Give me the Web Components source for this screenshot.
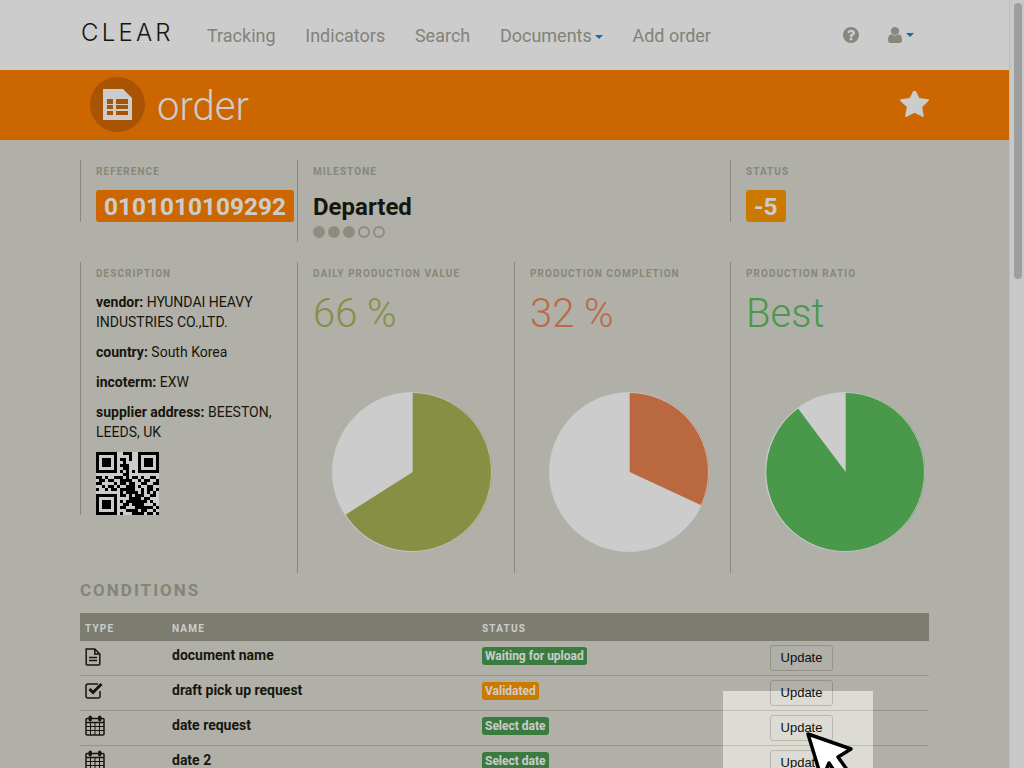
<!DOCTYPE html>
<html lang="en">
<head>
<meta charset="utf-8">
<title>CLEAR - order</title>
<style>
  html, body { margin: 0; height: 768px; overflow: hidden; }
  body { font-family: Roboto, "Liberation Sans", sans-serif; font-size: 14px; color: #1c1c10; background: #dcdcd4; }
  b { font-weight: 700; }
</style>
</head>
<body>
<clear-app>
  <clear-navbar></clear-navbar>
  <clear-banner title-text="order"></clear-banner>

  <clear-info-grid>
    <clear-field label="REFERENCE"><clear-tag size="big" color="#ff8000">0101010109292</clear-tag></clear-field>
    <clear-field label="MILESTONE" wide><clear-milestone text="Departed" done="3" total="5"></clear-milestone></clear-field>
    <clear-field label="STATUS"><clear-tag size="big" color="#ff9800">-5</clear-tag></clear-field>
  </clear-info-grid>

  <clear-info-grid>
    <clear-field label="DESCRIPTION">
      <clear-description>
        <p><b>vendor:</b> HYUNDAI HEAVY<br>INDUSTRIES CO.,LTD.</p>
        <p><b>country:</b> South Korea</p>
        <p><b>incoterm:</b> EXW</p>
        <p><b>supplier address:</b> BEESTON,<br>LEEDS, UK</p>
        <clear-qr></clear-qr>
      </clear-description>
    </clear-field>
    <clear-field label="DAILY PRODUCTION VALUE"><clear-chart value="66 %" color="#a9b356" end-x="-66" end-y="42"></clear-chart></clear-field>
    <clear-field label="PRODUCTION COMPLETION"><clear-chart value="32 %" text-color="#e9855a" color="#e98250" end-x="71" end-y="33" short-arc></clear-chart></clear-field>
    <clear-field label="PRODUCTION RATIO"><clear-chart value="Best" color="#5dbe5d" end-x="-48" end-y="-64"></clear-chart></clear-field>
  </clear-info-grid>

  <clear-conditions>
    <clear-condition icon="file" name="document name"><clear-tag color="#499a4f">Waiting for upload</clear-tag></clear-condition>
    <clear-condition icon="check" name="draft pick up request"><clear-tag color="#ff9800">Validated</clear-tag></clear-condition>
    <clear-condition icon="calendar" name="date request"><clear-tag color="#499a4f">Select date</clear-tag></clear-condition>
    <clear-condition icon="calendar" name="date 2"><clear-tag color="#499a4f">Select date</clear-tag></clear-condition>
  </clear-conditions>
</clear-app>
<clear-spotlight></clear-spotlight>

<script>
// font awesome shapes, 1792 grid
const FA = {
  star: 'M1728 647q0 22-26 48l-363 354 86 500q1 7 1 20 0 21-10.5 35.5t-30.5 14.5q-19 0-40-12l-449-236-449 236q-22 12-40 12-21 0-31.5-14.5t-10.5-35.5q0-6 2-20l86-500-364-354q-25-27-25-48 0-37 56-46l502-73 225-455q19-41 49-41t49 41l225 455 502 73q56 9 56 46z',
  help: 'M1024 1376v-192q0-14-9-23t-23-9h-192q-14 0-23 9t-9 23v192q0 14 9 23t23 9h192q14 0 23-9t9-23zm256-672q0-88-55.5-163t-138.5-116-170-41q-243 0-371 213-15 24 8 42l132 100q7 6 19 6 16 0 25-12 53-68 86-92 34-24 86-24 48 0 85.5 26t37.5 59q0 38-20 61t-68 45q-63 28-115.5 86.5t-52.5 125.5v36q0 14 9 23t23 9h192q14 0 23-9t9-23q0-19 21.5-49.5t54.5-49.5q32-18 49-28.5t46-35 44.5-48 28-60.5 12.5-81zm384 192q0 209-103 385.5t-279.5 279.5-385.5 103-385.5-103-279.5-279.5-103-385.5 103-385.5 279.5-279.5 385.5-103 385.5 103 279.5 279.5 103 385.5z',
  user: 'M1536 1399q0 109-62.5 187t-150.5 78h-854q-88 0-150.5-78t-62.5-187q0-85 8.5-160.5t31.5-152 58.5-131 94-89 134.5-34.5q131 128 313 128t313-128q76 0 134.5 34.5t94 89 58.5 131 31.5 152 8.5 160.5zm-256-887q0 159-112.5 271.5t-271.5 112.5-271.5-112.5-112.5-271.5 112.5-271.5 271.5-112.5 271.5 112.5 112.5 271.5z'
};

class ClearApp extends HTMLElement {
  connectedCallback() {
    if (this.shadowRoot) return;
    const shadow = this.attachShadow({ mode: 'open' });
    shadow.innerHTML = `
      <style>
        :host { display: flex; height: 768px; overflow: hidden; }
        main { flex: 1; min-width: 0; overflow: hidden; }
        .track { width: 15px; flex: none; box-sizing: border-box; padding: 3px 2px 0 4px; background: #fafafa; border-left: 1px solid #ececec; }
        .thumb { height: 276px; border-radius: 5px; background: #c6c6c6; }
      </style>
      <main><slot></slot></main>
      <div class="track"><div class="thumb"></div></div>
    `;
  }
}

class ClearNavbar extends HTMLElement {
  connectedCallback() {
    if (this.shadowRoot) return;
    const shadow = this.attachShadow({ mode: 'open' });
    shadow.innerHTML = `
      <style>
        :host { display: flex; align-items: center; height: 70px; padding: 0 95px 0 81px; background: #ffffff; }
        .logo { font: 300 24px Inter, sans-serif; letter-spacing: 3.2px; color: #1c1c10; width: 126px; margin-top: -5px; }
        nav { display: flex; gap: 29.7px; flex: 1; font-size: 18px; color: #a4a496; }
        .caret { display: inline-block; width: 0; height: 0; margin-left: 3px; vertical-align: 3px; border: 4px solid transparent; border-top-color: #0d8cdc; border-bottom: 0; }
        .tools { display: flex; align-items: center; color: #a9a99b; }
        svg { display: block; fill: currentColor; }
        .user { display: flex; align-items: center; margin-left: 29px; }
        .user .caret { margin-left: 4px; vertical-align: 0; }
      </style>
      <div class="logo">CLEAR</div>
      <nav>
        <span>Tracking</span><span>Indicators</span><span>Search</span>
        <span>Documents<i class="caret"></i></span><span>Add order</span>
      </nav>
      <div class="tools">
        <svg width="16" height="16" viewBox="128 128 1536 1536"><path d="${FA.help}"/></svg>
        <div class="user">
          <svg width="14" height="16" viewBox="256 128 1280 1536" preserveAspectRatio="none"><path d="${FA.user}"/></svg>
          <i class="caret"></i>
        </div>
      </div>
    `;
  }
}

class ClearBanner extends HTMLElement {
  connectedCallback() {
    if (this.shadowRoot) return;
    const shadow = this.attachShadow({ mode: 'open' });
    shadow.innerHTML = `
      <style>
        :host { display: flex; align-items: center; height: 70px; padding: 0 80px 0 90px; background: #ff8000; color: #ffffff; }
        .badge { width: 55px; height: 55px; margin-top: -1px; border-radius: 50%; background: #d26a06; display: flex; align-items: center; justify-content: center; }
        h1 { flex: 1; margin: 2px 0 0 12px; font-size: 40px; font-weight: 300; color: #ffffff; }
        .star { display: block; fill: #ffffff; }
      </style>
      <div class="badge">
        <svg width="29" height="31" viewBox="0 0 29 31">
          <path fill="#ffffff" fill-rule="evenodd" d="M0 0h20l9 9v22H0zM4 10v5h6v-5zM13 10v5h12v-5zM4 16v4h6v-4zM13 16v4h12v-4zM4 22v4h6v-4zM13 22v4h12v-4z"/>
        </svg>
      </div>
      <h1>${this.getAttribute('title-text')}</h1>
      <svg class="star" width="29" height="28" viewBox="64 128 1664 1600"><path d="${FA.star}"/></svg>
    `;
  }
}

class ClearInfoGrid extends HTMLElement {
  connectedCallback() {
    if (this.shadowRoot) return;
    const shadow = this.attachShadow({ mode: 'open' });
    shadow.innerHTML = `
      <style>
        :host { display: grid; grid-template-columns: 217px 217px 216px 217px; align-items: start; margin: 20px 0 0 80px; }
      </style>
      <slot></slot>
    `;
  }
}

class ClearField extends HTMLElement {
  connectedCallback() {
    if (this.shadowRoot) return;
    const shadow = this.attachShadow({ mode: 'open' });
    shadow.innerHTML = `
      <style>
        :host { display: block; box-sizing: border-box; padding-left: 15px; border-left: 1px solid #aaaa9c; }
        :host([wide]) { grid-column: span 2; }
        .label { height: 21px; padding-top: 1px; font-size: 10px; font-weight: 700; line-height: 22px; letter-spacing: 1.05px; color: #a9a997; }
      </style>
      <div class="label">${this.getAttribute('label')}</div>
      <slot></slot>
    `;
  }
}

class ClearTag extends HTMLElement {
  connectedCallback() {
    if (this.shadowRoot) return;
    const shadow = this.attachShadow({ mode: 'open' });
    shadow.innerHTML = `
      <style>
        :host { display: inline-block; height: 18px; padding: 0 3px; border-radius: 3px; font-size: 12px; font-weight: 700; line-height: 18px; color: #ffffff; background: ${this.getAttribute('color')}; }
        :host([size="big"]) { height: 32px; margin-top: 8px; padding: 0 8px; font-size: 24.4px; line-height: 33px; vertical-align: top; }
      </style>
      <slot></slot>
    `;
  }
}

class ClearMilestone extends HTMLElement {
  connectedCallback() {
    if (this.shadowRoot) return;
    const done = +this.getAttribute('done');
    const total = +this.getAttribute('total');
    let dots = '';
    for (let i = 0; i < total; i++) dots += `<i class="${i < done ? 'on' : ''}"></i>`;
    const shadow = this.attachShadow({ mode: 'open' });
    shadow.innerHTML = `
      <style>
        :host { display: block; padding: 9px 0 4px; }
        .text { font-size: 24px; font-weight: 700; line-height: 32px; color: #1c1c10; }
        .dots { display: flex; gap: 3px; margin-top: 3px; }
        i { width: 12px; height: 12px; box-sizing: border-box; border: 2px solid #b0b0a0; border-radius: 50%; }
        i.on { background: #b0b0a0; }
      </style>
      <div class="text">${this.getAttribute('text')}</div>
      <div class="dots">${dots}</div>
    `;
  }
}

class ClearDescription extends HTMLElement {
  connectedCallback() {
    if (this.shadowRoot) return;
    const shadow = this.attachShadow({ mode: 'open' });
    shadow.innerHTML = `
      <style>
        :host { display: block; padding-top: 8px; line-height: 20px; }
        ::slotted(p) { margin: 0 0 10px; }
      </style>
      <slot></slot>
    `;
  }
}

class ClearQr extends HTMLElement {
  connectedCallback() {
    if (this.shadowRoot) return;
    const rows = [
      '111111100111001111111',
      '100000100001001000001',
      '101110101101001011101',
      '101110100100001011101',
      '101110101110001011101',
      '100000100110001000001',
      '111111101010101111111',
      '000000000110000000000',
      '110100111010110100110',
      '011011001111001011001',
      '110000101101100110011',
      '001011010011101001100',
      '100101101111100101101',
      '000000001011110101010',
      '111111101101011100110',
      '100000100001111011000',
      '101110101011111110100',
      '101110100110111100010',
      '101110101100011111101',
      '100000100011110110010',
      '111111101000111101101'
    ];
    let d = '';
    rows.forEach((row, y) => {
      [...row].forEach((c, x) => { if (c === '1') d += `M${x} ${y}h1v1h-1z`; });
    });
    const shadow = this.attachShadow({ mode: 'open' });
    shadow.innerHTML = `
      <style>
        :host { display: block; width: 63px; height: 63px; background: #ffffff; }
        svg { display: block; }
      </style>
      <svg width="63" height="63" viewBox="0 0 21 21" shape-rendering="crispEdges"><path d="${d}"/></svg>
    `;
  }
}

class ClearChart extends HTMLElement {
  connectedCallback() {
    if (this.shadowRoot) return;
    const color = this.getAttribute('color');
    const textColor = this.getAttribute('text-color') || color;
    // end point of the wedge, from the centre; scaled up onto the circle
    const ex = +this.getAttribute('end-x');
    const ey = +this.getAttribute('end-y');
    const k = 79.5 / Math.hypot(ex, ey);
    const large = this.hasAttribute('short-arc') ? 0 : 1;
    const shadow = this.attachShadow({ mode: 'open' });
    shadow.innerHTML = `
      <style>
        :host { display: block; box-sizing: border-box; height: 289px; padding-top: 8px; }
        .value { font-size: 40px; font-weight: 300; line-height: 44px; color: ${textColor}; }
        svg { display: block; margin: 56px 0 0 19px; }
      </style>
      <div class="value">${this.getAttribute('value')}</div>
      <svg width="160" height="160" viewBox="-80 -80 160 160">
        <circle r="79.5" fill="#ffffff"/>
        <path fill="${color}" transform="translate(.7 0)" d="M0 0L0 -79.5A79.5 79.5 0 ${large} 1 ${(ex * k).toFixed(2)} ${(ey * k).toFixed(2)}Z"/>
        <circle r="79.5" fill="none" stroke="#ffffff" stroke-width=".8"/>
      </svg>
    `;
  }
}

class ClearConditions extends HTMLElement {
  connectedCallback() {
    if (this.shadowRoot) return;
    const shadow = this.attachShadow({ mode: 'open' });
    shadow.innerHTML = `
      <style>
        :host { display: block; padding: 7px 80px 0; }
        h2 { margin: 0 0 13px; font-size: 17px; font-weight: 700; line-height: 20px; letter-spacing: 2px; color: #a6a696; }
        .head { box-sizing: border-box; display: grid; grid-template-columns: 92px 310px 1fr; align-items: center; height: 28px; padding-top: 2px; background: #9b9b8c; color: #ffffff; font-size: 10px; font-weight: 700; letter-spacing: 1.2px; }
        .head span:first-child { padding-left: 5px; }
      </style>
      <h2>CONDITIONS</h2>
      <div class="head"><span>TYPE</span><span>NAME</span><span>STATUS</span></div>
      <slot></slot>
    `;
  }
}

const TYPE_ICONS = {
  file: `<svg style="margin-top:-1px" width="16" height="18" viewBox="0 0 16 18" fill="none" stroke="currentColor" stroke-width="1.5"><path d="M1.2 1h8.600l5 5v10c0 .6-.4 1-1 1H2.200c-.6 0-1-.4-1-1zM9.800 1v5h5M4 9.500h8M4 12.500h8"/></svg>`,
  check: `<svg style="margin-top:-3px" width="19" height="17" viewBox="0 0 19 17" fill="none" stroke="currentColor"><path stroke-width="1.500" d="M15 9v5c0 1.200-.8 2-2 2H3c-1.200 0-2-.8-2-2V4c0-1.200.8-2 2-2h10"/><path stroke-width="3" d="M4.500 7l3.500 3.500 8.500-8.500"/></svg>`,
  calendar: `<svg style="margin-top:-3px" width="20" height="21" viewBox="0 0 20 21" fill="none" stroke="currentColor" stroke-width="1"><path stroke-width="1.500" d="M2 3.500h16c.6 0 1 .4 1 1V19c0 .6-.4 1-1 1H2c-.6 0-1-.4-1-1V4.500c0-.6.4-1 1-1z"/><path stroke-width="1.500" d="M1 7.500h18"/><path d="M5.500 7.500V20M10 7.500V20M14.500 7.500V20M1 11.500h18M1 15.500h18"/><rect x="4" y="1" width="2.500" height="5" rx="1.200" fill="currentColor"/><rect x="13.500" y="1" width="2.500" height="5" rx="1.200" fill="currentColor"/></svg>`
};

class ClearCondition extends HTMLElement {
  connectedCallback() {
    if (this.shadowRoot) return;
    const shadow = this.attachShadow({ mode: 'open' });
    shadow.innerHTML = `
      <style>
        :host { display: grid; grid-template-columns: 92px 310px 288px 1fr; align-items: center; box-sizing: border-box; height: 35px; border-bottom: 1px solid #bcbcaf; }
        .icon { padding-left: 5px; margin-top: -2px; color: #1c1c10; }
        .icon svg { display: block; }
        .name { font-weight: 700; line-height: 20px; margin-top: -6px; }
        .status { margin-top: -5px; display: flex; }
        button { width: 63px; height: 26px; padding: 0; margin-top: -1px; box-sizing: border-box; border: 1px solid #b8b8aa; border-radius: 3px; background: #dcdcd4; font: 13px "Liberation Sans", Arial, sans-serif; color: #111; }
      </style>
      <div class="icon">${TYPE_ICONS[this.getAttribute('icon')]}</div>
      <div class="name">${this.getAttribute('name')}</div>
      <div class="status"><slot></slot></div>
      <div><button>Update</button></div>
    `;
  }
}

// dims the page except a hole around the button, with the tutorial pointer in it
class ClearSpotlight extends HTMLElement {
  connectedCallback() {
    if (this.shadowRoot) return;
    const shadow = this.attachShadow({ mode: 'open' });
    shadow.innerHTML = `
      <style>
        :host { position: fixed; left: 723px; top: 691px; width: 150px; height: 150px; box-shadow: 0 0 0 2000px rgba(0, 0, 0, 0.2); }
        svg { position: absolute; left: 0; top: 0; overflow: visible; }
      </style>
      <svg width="150" height="150" viewBox="723 691 150 150">
        <path fill="#ffffff" stroke="#000000" stroke-width="3.500" stroke-linejoin="round" d="M808 734L851 749L838 757L858 785L848 792L829 763L822 780Z"/>
      </svg>
    `;
  }
}

customElements.define('clear-app', ClearApp);
customElements.define('clear-navbar', ClearNavbar);
customElements.define('clear-banner', ClearBanner);
customElements.define('clear-info-grid', ClearInfoGrid);
customElements.define('clear-field', ClearField);
customElements.define('clear-tag', ClearTag);
customElements.define('clear-milestone', ClearMilestone);
customElements.define('clear-description', ClearDescription);
customElements.define('clear-qr', ClearQr);
customElements.define('clear-chart', ClearChart);
customElements.define('clear-conditions', ClearConditions);
customElements.define('clear-condition', ClearCondition);
customElements.define('clear-spotlight', ClearSpotlight);
</script>
</body>
</html>
